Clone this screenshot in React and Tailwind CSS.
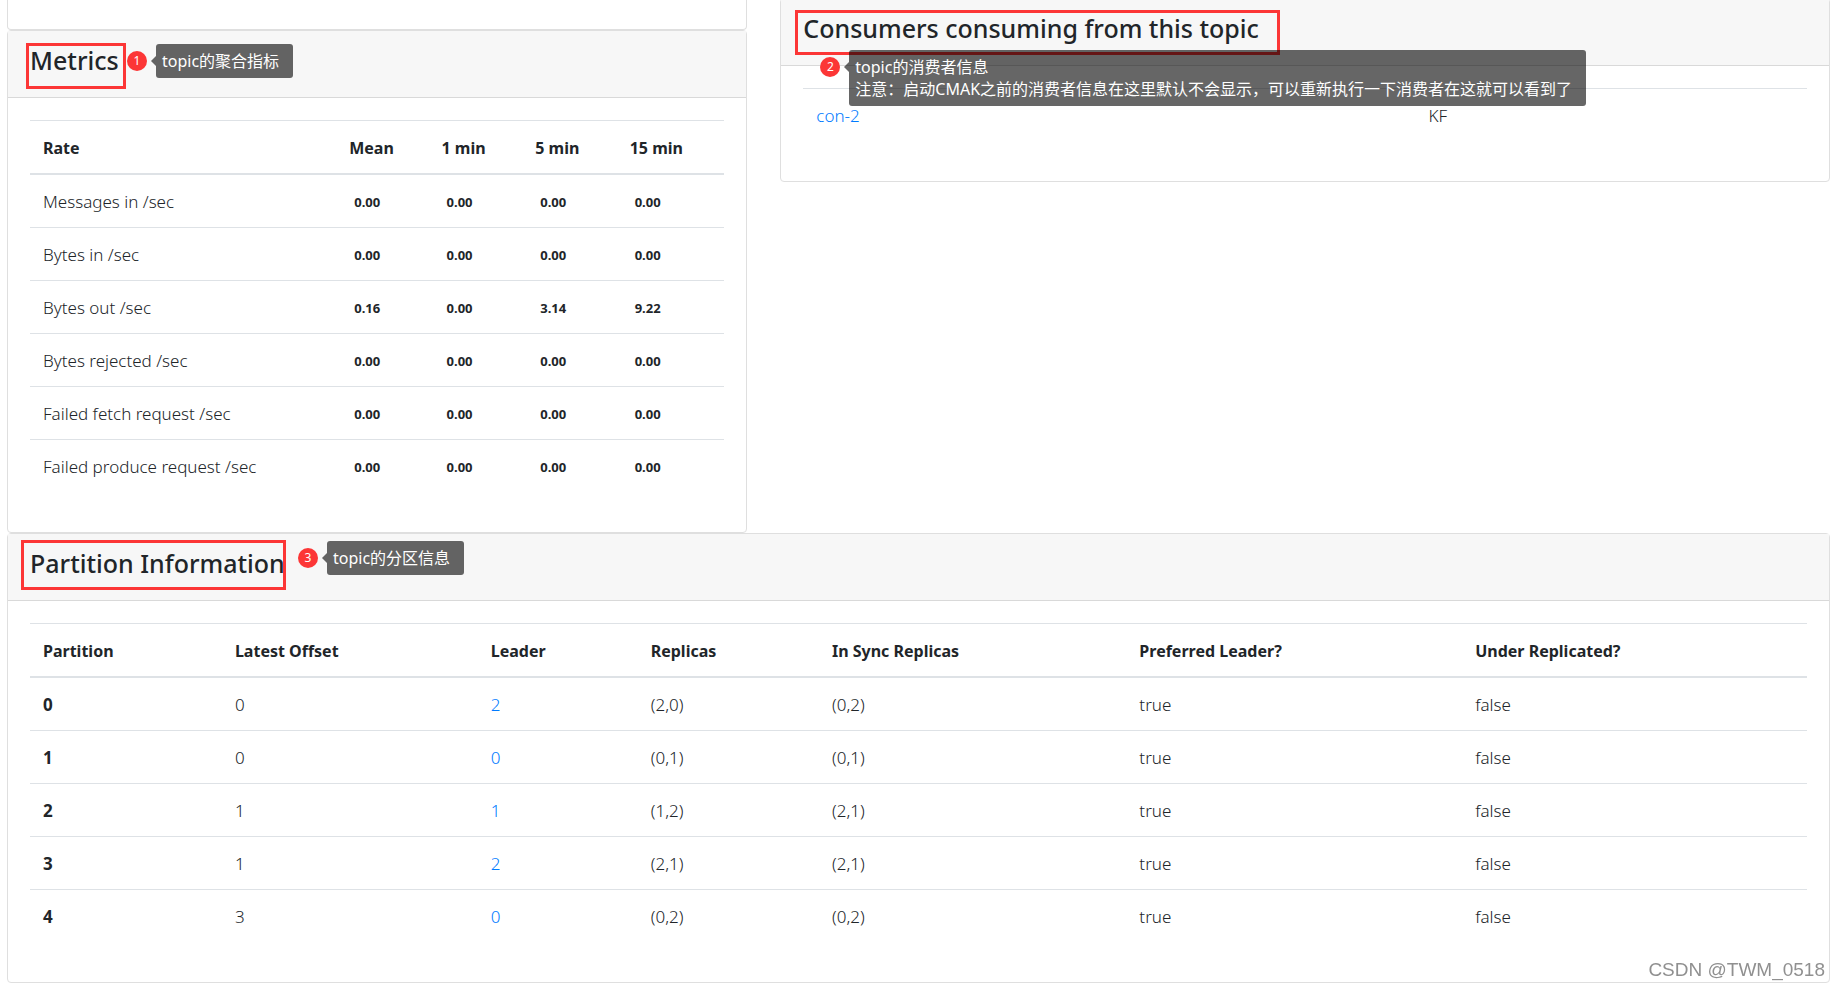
import React from "react";

const rates = [
  ["Messages in /sec", "0.00", "0.00", "0.00", "0.00"],
  ["Bytes in /sec", "0.00", "0.00", "0.00", "0.00"],
  ["Bytes out /sec", "0.16", "0.00", "3.14", "9.22"],
  ["Bytes rejected /sec", "0.00", "0.00", "0.00", "0.00"],
  ["Failed fetch request /sec", "0.00", "0.00", "0.00", "0.00"],
  ["Failed produce request /sec", "0.00", "0.00", "0.00", "0.00"],
];

const partitions = [
  ["0", "0", "2", "(2,0)", "(0,2)", "true", "false"],
  ["1", "0", "0", "(0,1)", "(0,1)", "true", "false"],
  ["2", "1", "1", "(1,2)", "(2,1)", "true", "false"],
  ["3", "1", "2", "(2,1)", "(2,1)", "true", "false"],
  ["4", "3", "0", "(0,2)", "(0,2)", "true", "false"],
];

const rateColumns = [
  ["Rate", "w-[44.1%]"],
  ["Mean", "w-[13.3%]"],
  ["1 min", "w-[13.5%]"],
  ["5 min", "w-[13.6%]"],
  ["15 min", "w-[15.5%]"],
];

const partitionColumns = [
  ["Partition", "w-[10.8%]"],
  ["Latest Offset", "w-[14.4%]"],
  ["Leader", "w-[9%]"],
  ["Replicas", "w-[10.2%]"],
  ["In Sync Replicas", "w-[17.3%]"],
  ["Preferred Leader?", "w-[18.9%]"],
  ["Under Replicated?", "w-[19.4%]"],
];

function Card({ title, note, className = "", children }) {
  return (
    <section className={"rounded border border-[#dfdfdf] bg-white " + className}>
      <header className="relative border-b border-[#d9d9d9] bg-[#f7f7f7] px-[22px] pt-[13px] pb-[21px]">
        <h4 className="text-[25px] leading-8 font-medium">{title}</h4>
        {note}
      </header>
      <div className="px-[22px] pt-[22px] pb-10">{children}</div>
    </section>
  );
}

function Note({ number, frame, place, children }) {
  return (
    <>
      <div className={"absolute border-3 border-[#fc3636] " + frame} />
      <div className={"absolute z-10 flex items-start " + place}>
        <span className="mt-[7px] flex size-5 items-center justify-center rounded-full bg-[#fc3636] text-xs text-white">
          {number}
        </span>
        <span className="mt-3 ml-1 border-y-5 border-r-5 border-y-transparent border-r-black/60" />
        <p className="rounded-[3px] bg-black/60 px-1.5 py-1.5 text-base leading-[22px] whitespace-nowrap text-white">
          {children}
        </p>
      </div>
    </>
  );
}

function HeadRow({ columns }) {
  return (
    <thead>
      <tr>
        {columns.map(([label, width]) => (
          <th
            key={label}
            scope="col"
            className={"border-t border-b-2 border-[#dee2e6] px-[13px] pt-3.5 pb-3 text-left leading-[26px] font-bold " + width}
          >
            {label}
          </th>
        ))}
      </tr>
    </thead>
  );
}

const cell = "border-[#dee2e6] px-[13px] pt-3.5 pb-3 text-left text-[17px] leading-[26px] group-not-first:border-t";

export default function App() {
  return (
    <main className="min-h-screen bg-white pr-2.5 pl-[7px] font-['Noto_Sans','Noto_Sans_CJK_SC',sans-serif] text-base text-[#212529]">
      <div className="grid grid-cols-12 items-start gap-x-[33px]">
        <div className="col-span-5">
          <div className="h-[30px] rounded-b border border-t-0 border-[#dfdfdf]" />
          <Card
            title="Metrics"
            note={
              <Note number="1" frame="top-3 left-[18px] h-[46px] w-[100px]" place="top-[13px] left-[119px]">
                <span className="pr-2">topic的聚合指标</span>
              </Note>
            }
          >
            <table className="w-full table-fixed border-separate border-spacing-0">
              <HeadRow columns={rateColumns} />
              <tbody>
                {rates.map(([label, ...values]) => (
                  <tr key={label} className="group">
                    <td className={cell + " font-[350]"}>{label}</td>
                    {values.map((value, i) => (
                      <td key={i} className={cell}>
                        <span className="block px-[5px] text-[13px] font-bold">{value}</span>
                      </td>
                    ))}
                  </tr>
                ))}
              </tbody>
            </table>
          </Card>
        </div>

        <Card
          className="col-span-7 -mt-0.5"
          title="Consumers consuming from this topic"
          note={
            <Note number="2" frame="top-[11px] left-[14px] h-[45px] w-[485px]" place="top-[51px] left-[39px]">
              topic的消费者信息
              <br />
              <span className="pr-2">
                注意：启动CMAK之前的消费者信息在这里默认不会显示，可以重新执行一下消费者在这就可以看到了
              </span>
            </Note>
          }
        >
          <table className="w-full table-fixed border-separate border-spacing-0">
            <tbody>
              <tr className="text-[17px] font-[350]">
                <td className="w-[61%] border-t border-[#dee2e6] px-[13px] pt-3.5 pb-3 leading-[26px]">
                  <a href="#con-2" className="text-[#007bff]">con-2</a>
                </td>
                <td className="border-t border-[#dee2e6] px-[13px] pt-3.5 pb-3 leading-[26px]">KF</td>
              </tr>
            </tbody>
          </table>
        </Card>
      </div>

      <Card
        title="Partition Information"
        note={
          <Note number="3" frame="top-1.5 left-[13px] h-[50px] w-[265px]" place="top-[7px] left-[290px]">
            <span className="pr-2">topic的分区信息</span>
          </Note>
        }
      >
        <table className="w-full table-fixed border-separate border-spacing-0">
          <HeadRow columns={partitionColumns} />
          <tbody>
            {partitions.map(([id, offset, leader, ...rest]) => (
              <tr key={id} className="group font-[350]">
                <th scope="row" className={cell + " font-bold"}>{id}</th>
                <td className={cell}>{offset}</td>
                <td className={cell}>
                  <a href={"#broker-" + leader} className="text-[#007bff]">{leader}</a>
                </td>
                {rest.map((value, i) => (
                  <td key={i} className={cell}>{value}</td>
                ))}
              </tr>
            ))}
          </tbody>
        </table>
      </Card>

      <div className="fixed right-[15px] bottom-1.5 font-['Liberation_Sans',sans-serif] text-[19px] leading-6 text-[#909090]">
        CSDN @TWM_0518
      </div>
    </main>
  );
}
